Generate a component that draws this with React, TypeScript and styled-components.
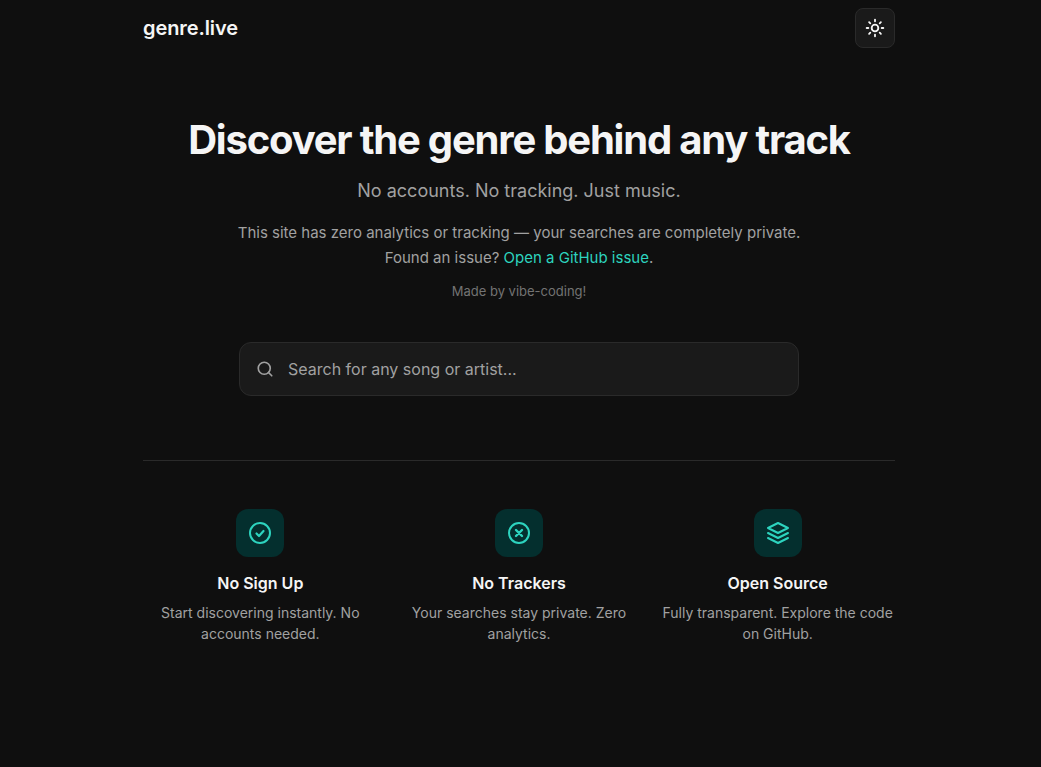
import React from 'react';
import styled, { createGlobalStyle } from 'styled-components';
import { Sun, Search } from 'lucide-react';

const GlobalStyle = createGlobalStyle`
    * { box-sizing: border-box; }
    html, body { margin: 0; padding: 0; background: #0f0f0f; }
    body { padding-right: 3px; font-family: Inter, "Liberation Sans", sans-serif; color: #f5f5f5; }
`;

const Page = styled.div`
    width: 784px;
    min-height: 767px;
    margin: 0 auto;
    padding: 0 16px;
`;

const Header = styled.header`
    display: flex;
    align-items: center;
    justify-content: space-between;
    height: 56px;
`;

const Logo = styled.div`
    font-size: 20px;
    font-weight: 600;
    letter-spacing: -0.1px;
`;

const ThemeButton = styled.button`
    display: flex;
    align-items: center;
    justify-content: center;
    width: 40px;
    height: 40px;
    padding: 0;
    background: #1a1a1a;
    border: 1px solid #2a2a2a;
    border-radius: 8px;
    color: #f5f5f5;
`;

const Hero = styled.section`
    display: flex;
    flex-direction: column;
    align-items: center;
    text-align: center;
    padding-top: 56px;
    padding-bottom: 64px;
    border-bottom: 1px solid #2a2a2a;
`;

const Title = styled.h1`
    margin: 0;
    font-size: 40px;
    line-height: 56px;
    font-weight: 700;
    letter-spacing: -1.2px;
`;

const Tagline = styled.p`
    margin: 9px 0 0;
    font-size: 18px;
    line-height: 28px;
    color: #a1a1a1;
`;

const Notice = styled.p`
    margin: 16px 0 0;
    font-size: 15px;
    line-height: 24.5px;
    color: #a1a1a1;
`;

const IssueLink = styled.a`
    color: #2dd4bf;
    text-decoration: none;
`;

const Credit = styled.p`
    margin: 11px 0 0;
    font-size: 13px;
    line-height: 20px;
    color: #737373;
`;

const SearchBox = styled.div`
    display: flex;
    align-items: center;
    gap: 14px;
    width: 560px;
    height: 54px;
    margin-top: 41px;
    padding: 0 16px;
    background: #1a1a1a;
    border: 1px solid #2a2a2a;
    border-radius: 12px;
    color: #a1a1a1;
`;

const SearchInput = styled.input`
    flex: 1;
    min-width: 0;
    padding: 0;
    background: transparent;
    border: none;
    outline: none;
    font-family: inherit;
    font-size: 16px;
    color: #f5f5f5;

    &::placeholder {
        color: #a1a1a1;
        opacity: 1;
    }
`;

const Features = styled.section`
    display: grid;
    grid-template-columns: repeat(3, 1fr);
    gap: 24px;
    padding-top: 48px;
`;

const Feature = styled.div`
    display: flex;
    flex-direction: column;
    align-items: center;
    text-align: center;
`;

const FeatureIcon = styled.div`
    display: flex;
    align-items: center;
    justify-content: center;
    width: 48px;
    height: 48px;
    border-radius: 12px;
    background: #042f2e;
    color: #2dd4bf;
`;

const FeatureTitle = styled.h3`
    margin: 14px 0 0;
    font-size: 16px;
    line-height: 24px;
    font-weight: 600;
`;

const FeatureText = styled.p`
    margin: 7px 0 0;
    font-size: 14px;
    line-height: 21px;
    color: #a1a1a1;
`;

const Glyph: React.FC<{ children: React.ReactNode }> = ({ children }) => (
    <svg width="24" height="24" viewBox="0 0 24 24" fill="none" stroke="currentColor" strokeWidth="2" strokeLinecap="round" strokeLinejoin="round">
        {children}
    </svg>
);

const features = [
    {
        icon: (
            <Glyph>
                <circle cx="12" cy="12" r="10" />
                <path d="M8.5 12.5l2.5 2.5 4.5-5" strokeWidth="2.2" />
            </Glyph>
        ),
        title: 'No Sign Up',
        text: 'Start discovering instantly. No accounts needed.',
    },
    {
        icon: (
            <Glyph>
                <circle cx="12" cy="12" r="10" />
                <path d="M9 9l6 6M15 9l-6 6" strokeWidth="2.4" />
            </Glyph>
        ),
        title: 'No Trackers',
        text: 'Your searches stay private. Zero analytics.',
    },
    {
        icon: (
            <Glyph>
                <polygon points="12 2 2 7 12 12 22 7 12 2" />
                <polyline points="2 17 12 22 22 17" />
                <polyline points="2 12 12 17 22 12" />
            </Glyph>
        ),
        title: 'Open Source',
        text: 'Fully transparent. Explore the code on GitHub.',
    },
];

const App: React.FC = () => (
    <>
        <GlobalStyle />
        <Page>
            <Header>
                <Logo>genre.live</Logo>
                <ThemeButton aria-label="Toggle theme">
                    <Sun size={20} strokeWidth={2.2} />
                </ThemeButton>
            </Header>
            <Hero>
                <Title>Discover the genre behind any track</Title>
                <Tagline>No accounts. No tracking. Just music.</Tagline>
                <Notice>
                    This site has zero analytics or tracking — your searches are completely private.
                    <br />
                    Found an issue? <IssueLink href="#">Open a GitHub issue</IssueLink>.
                </Notice>
                <Credit>Made by vibe-coding!</Credit>
                <SearchBox>
                    <Search size={18} strokeWidth={2.2} />
                    <SearchInput placeholder="Search for any song or artist..." />
                </SearchBox>
            </Hero>
            <Features>
                {features.map(({ icon, title, text }) => (
                    <Feature key={title}>
                        <FeatureIcon>{icon}</FeatureIcon>
                        <FeatureTitle>{title}</FeatureTitle>
                        <FeatureText>{text}</FeatureText>
                    </Feature>
                ))}
            </Features>
        </Page>
    </>
);

export default App;
